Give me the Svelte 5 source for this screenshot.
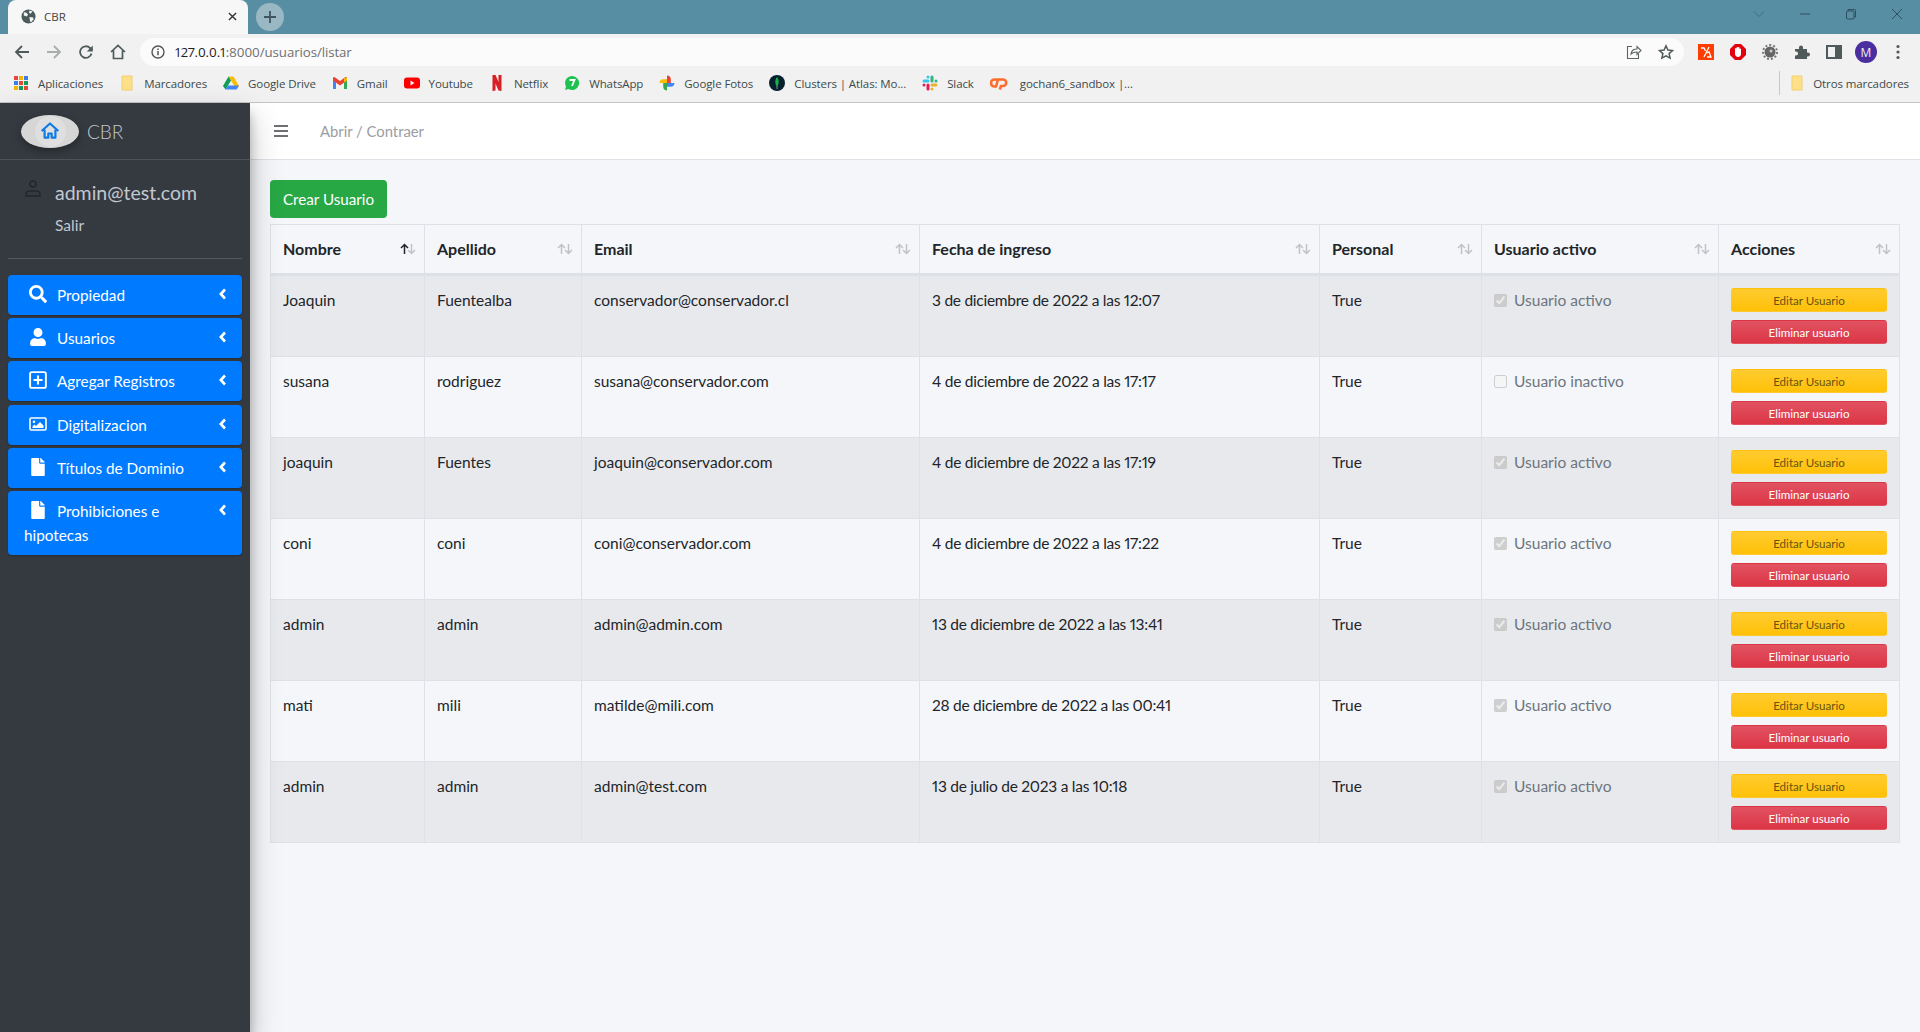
<script>
  const bookmarks = [
    { icon: 'apps', label: 'Aplicaciones' },
    { icon: 'folder', label: 'Marcadores' },
    { icon: 'drive', label: 'Google Drive' },
    { icon: 'gmail', label: 'Gmail' },
    { icon: 'youtube', label: 'Youtube' },
    { icon: 'netflix', label: 'Netflix' },
    { icon: 'whatsapp', label: 'WhatsApp' },
    { icon: 'photos', label: 'Google Fotos' },
    { icon: 'mongo', label: 'Clusters | Atlas: Mo...' },
    { icon: 'slack', label: 'Slack' },
    { icon: 'cp', label: 'gochan6_sandbox |...' }
  ];
  const appDots = ['#e8453c','#f4b400','#3b7ded','#3b7ded','#e8453c','#0f9d58','#f4b400','#0f9d58','#e8453c'];
  const menu = [
    { icon: 'search', label: 'Propiedad' },
    { icon: 'user', label: 'Usuarios' },
    { icon: 'plus', label: 'Agregar Registros' },
    { icon: 'image', label: 'Digitalizacion' },
    { icon: 'file', label: 'Títulos de Dominio' },
    { icon: 'file', label: 'Prohibiciones e hipotecas' }
  ];
  const columns = ['Nombre', 'Apellido', 'Email', 'Fecha de ingreso', 'Personal', 'Usuario activo', 'Acciones'];
  const users = [
    ['Joaquin', 'Fuentealba', 'conservador@conservador.cl', '3 de diciembre de 2022 a las 12:07', true],
    ['susana', 'rodriguez', 'susana@conservador.com', '4 de diciembre de 2022 a las 17:17', false],
    ['joaquin', 'Fuentes', 'joaquin@conservador.com', '4 de diciembre de 2022 a las 17:19', true],
    ['coni', 'coni', 'coni@conservador.com', '4 de diciembre de 2022 a las 17:22', true],
    ['admin', 'admin', 'admin@admin.com', '13 de diciembre de 2022 a las 13:41', true],
    ['mati', 'mili', 'matilde@mili.com', '28 de diciembre de 2022 a las 00:41', true],
    ['admin', 'admin', 'admin@test.com', '13 de julio de 2023 a las 10:18', true]
  ];
</script>

<div class="window">
  <header class="chrome">
    <div class="tabstrip">
      <div class="tab">
        <svg class="favicon" viewBox="0 0 16 16"><circle cx="8" cy="8" r="7.5" fill="#4a5a5a"/><path d="M3 3.500l3 .5 1.500 2-1.500 2-3-1zM9 1.500l3 1-1.500 2.500-2-1zM9 8.500l4 .5 .5 2-3 3.500-1-2z" fill="#f4f4f4"/></svg>
        <span class="tabtitle">CBR</span>
        <svg class="tabclose" viewBox="0 0 10 10"><path d="M1 1l8 8M9 1l-8 8" stroke="#333" stroke-width="1.500"/></svg>
      </div>
      <div class="newtab"><svg viewBox="0 0 14 14"><path d="M7 1v12M1 7h12" stroke="#3f5660" stroke-width="1.800"/></svg></div>
      <div class="wincontrols">
        <svg viewBox="0 0 12 12"><path d="M1 3.500l5 5 5-5" fill="none" stroke="#3f6b7d" stroke-width="1"/></svg>
        <svg viewBox="0 0 12 12"><path d="M1 6h10" stroke="#2f4f5c" stroke-width="1"/></svg>
        <svg viewBox="0 0 12 12"><path d="M3 3V1.500h6.500a1 1 0 0 1 1 1V9H9" fill="none" stroke="#2f4f5c"/><rect x="1.500" y="3" width="7.500" height="8" rx="1" fill="none" stroke="#2f4f5c"/></svg>
        <svg viewBox="0 0 12 12"><path d="M1 1l10 10M11 1L1 11" stroke="#2f4f5c" stroke-width="1"/></svg>
      </div>
    </div>
    <div class="toolbar">
      <div class="navbtns">
        <svg viewBox="0 0 16 16"><path d="M15 8H2M8 2L2 8l6 6" fill="none" stroke="#4f5b5b" stroke-width="1.800"/></svg>
        <svg viewBox="0 0 16 16"><path d="M1 8h13M8 2l6 6-6 6" fill="none" stroke="#a9adad" stroke-width="1.800"/></svg>
        <svg viewBox="0 0 16 16"><path d="M13.500 9.500A5.800 5.800 0 1 1 12 4L14 6" fill="none" stroke="#4f5b5b" stroke-width="1.800"/><path d="M14.800 1.500v6h-6z" fill="#4f5b5b"/></svg>
        <svg viewBox="0 0 16 16"><path d="M1 8l7-6.500L15 8M3.500 6.500V14.500h9V6.500" fill="none" stroke="#4f5b5b" stroke-width="1.700"/></svg>
      </div>
      <div class="omnibox">
        <svg class="info" viewBox="0 0 14 14"><circle cx="7" cy="7" r="6" fill="none" stroke="#555" stroke-width="1.400"/><path d="M7 6v4.200M7 3.400v1.500" stroke="#555" stroke-width="1.500"/></svg>
        <span class="url"><b>127.0.0.1</b>:8000/usuarios/listar</span>
        <svg class="share" viewBox="0 0 16 16"><path d="M6 2.500H1.500v12h11V10" fill="none" stroke="#5b6464" stroke-width="1.100"/><path d="M5 10c.5-3.500 3-5 6-5V2.500l4 4-4 4V8c-2.500 0-4.500 .5-6 2z" fill="none" stroke="#5b6464" stroke-width="1.100"/></svg>
        <svg class="star" viewBox="0 0 16 16"><path d="M8 1.800l1.900 4.200 4.600.5-3.400 3.100 1 4.500L8 11.800l-4.100 2.300 1-4.500L1.500 6.500l4.600-.5z" fill="none" stroke="#4f5b5b" stroke-width="1.500"/></svg>
      </div>
      <div class="extensions">
        <svg viewBox="0 0 16 16"><rect width="16" height="16" fill="#ff3d00"/><path d="M3 4h3l1.500 3M11 3L6 13M9 9l2-1 2 5H9" fill="none" stroke="#fff" stroke-width="1.300"/></svg>
        <svg viewBox="0 0 16 16"><path d="M5 0h6l5 5v6l-5 5H5l-5-5V5z" fill="#e3000f"/><path d="M5 7V4.500a.8 .8 0 0 1 1.500 0V3.500a.8 .8 0 0 1 1.500 0 .8 .8 0 0 1 1.500 0V5a.8 .8 0 0 1 1.500 0v5c0 2-1.500 3-3 3S5.500 12 5 10.500z" fill="#fff"/></svg>
        <svg viewBox="0 0 16 16"><circle cx="8" cy="8" r="5.500" fill="#666"/><circle cx="8" cy="8" r="7" fill="none" stroke="#777" stroke-width="2" stroke-dasharray="2 2"/><circle cx="9" cy="7" r="1.500" fill="#ccc"/></svg>
        <svg viewBox="0 0 16 16"><path d="M1 5h4V3.500a2 2 0 0 1 4 0V5h4v3.500h1a2 2 0 0 1 0 4h-1V15H1v-3.500h1a2 2 0 0 0 0-4H1z" fill="#4f5b5b"/></svg>
        <svg viewBox="0 0 16 16"><rect x="1" y="2" width="14" height="12" fill="none" stroke="#4f5b5b" stroke-width="2"/><rect x="9" y="2" width="6" height="12" fill="#4f5b5b"/></svg>
        <div class="avatar">M</div>
        <svg viewBox="0 0 16 16"><circle cx="8" cy="2.500" r="1.600" fill="#4f5b5b"/><circle cx="8" cy="8" r="1.600" fill="#4f5b5b"/><circle cx="8" cy="13.500" r="1.600" fill="#4f5b5b"/></svg>
      </div>
    </div>
    <div class="bookmarks">
      {#each bookmarks as b}
        <div class="bookmark">
          {#if b.icon === 'apps'}
            <div class="appgrid">{#each appDots as c}<i style:background={c}></i>{/each}</div>
          {:else if b.icon === 'folder'}
            <svg viewBox="0 0 16 16"><path d="M3 1h10v14H3z" fill="#ffe08a" stroke="#f2cf6a"/></svg>
          {:else if b.icon === 'drive'}
            <svg viewBox="0 0 16 16"><path d="M5.500 1.500h5L16 11l-2.500 3.500z" fill="#fbbc04"/><path d="M5.500 1.500L0 11l2.500 3.500L8 5.500z" fill="#0f9d58"/><path d="M5 10.500h11l-2.500 4h-11z" fill="#4285f4"/></svg>
          {:else if b.icon === 'gmail'}
            <svg viewBox="0 0 16 16"><path d="M1 4v10h3V7z" fill="#4285f4"/><path d="M15 4v10h-3V7z" fill="#34a853"/><path d="M1 2.500v3l7 5 7-5v-3l-1.500-.5L8 6 2.500 2z" fill="#ea4335"/><path d="M12 3.500l3-1v3l-3 2z" fill="#fbbc04"/></svg>
          {:else if b.icon === 'youtube'}
            <svg viewBox="0 0 16 16"><rect y="2.500" width="16" height="11" rx="3" fill="#f00"/><path d="M6.500 5.500v5l4-2.500z" fill="#fff"/></svg>
          {:else if b.icon === 'netflix'}
            <svg viewBox="0 0 16 16"><path d="M3.500 0h3l3 7V0h3v16l-3-.5-3-7v7l-3 .5z" fill="#d81f26"/></svg>
          {:else if b.icon === 'whatsapp'}
            <svg viewBox="0 0 16 16"><path d="M8 1a7 7 0 1 1-3.500 13L1 15l1-3.500A7 7 0 0 1 8 1z" fill="#1fc14f"/><path d="M5.500 5h5L8 11" fill="none" stroke="#fff" stroke-width="1.800"/></svg>
          {:else if b.icon === 'photos'}
            <svg viewBox="0 0 16 16"><path d="M8 8V0.500a4 4 0 0 1 3.800 3.800V8z" fill="#ea4335"/><path d="M8 8h7.500a4 4 0 0 1-3.800 3.800H8z" fill="#4285f4"/><path d="M8 8v7.500a4 4 0 0 1-3.800-3.800V8z" fill="#34a853"/><path d="M8 8H.5a4 4 0 0 1 3.800-3.800H8z" fill="#fbbc04"/></svg>
          {:else if b.icon === 'mongo'}
            <svg viewBox="0 0 16 16"><circle cx="8" cy="8" r="8" fill="#06202e"/><path d="M8 2c2 2.500 2.500 6 0 10-2.500-4-2-7.500 0-10z" fill="#18b04c"/><path d="M8 11v3" stroke="#9aa" stroke-width=".8"/></svg>
          {:else if b.icon === 'slack'}
            <svg viewBox="0 0 16 16"><g stroke-width="3" stroke-linecap="round"><path d="M6 2v0M2 6h4" stroke="#36c5f0"/><path d="M10 2v4M14 6h0" stroke="#2eb67d"/><path d="M14 10h-4M10 14h0" stroke="#ecb22e"/><path d="M6 14v-4M2 10h0" stroke="#e01e5a"/></g></svg>
          {:else if b.icon === 'cp'}
            <svg class="cpicon" viewBox="0 0 18 14"><path d="M7 3.500H4.500a3.500 3.500 0 0 0 0 7H6L8 3.500h5a3 3 0 0 1 0 6.500h-2L9.800 13.500" fill="none" stroke="#ff6c2c" stroke-width="2.600"/></svg>
          {/if}
          <span>{b.label}</span>
        </div>
      {/each}
      <div class="other">
        <svg viewBox="0 0 16 16"><path d="M3 1h10v14H3z" fill="#ffe08a" stroke="#f2cf6a"/></svg>
        <span>Otros marcadores</span>
      </div>
    </div>
  </header>

  <div class="page">
    <aside class="sidebar">
      <div class="brand">
        <div class="logo">
          <div class="logocircle">
            <svg viewBox="0 0 24 24"><path d="M2 12L12 3l10 9M5.500 10.500V20H10v-5h4v5h4.500v-9.500" fill="none" stroke="#0d7be6" stroke-width="2.600" stroke-linejoin="round"/></svg>
          </div>
        </div>
        <span class="brandtext">CBR</span>
      </div>
      <div class="sidebody">
        <div class="userpanel">
          <svg class="usericon" viewBox="0 0 16 17"><circle cx="8" cy="4" r="3" fill="none" stroke="#23272b" stroke-width="1.500"/><path d="M1 16v-2c0-2 2-3 4-3h6c2 0 4 1 4 3v2z" fill="none" stroke="#23272b" stroke-width="1.500"/></svg>
          <div class="userinfo">
            <div class="email">admin@test.com</div>
            <div class="salir">Salir</div>
          </div>
        </div>
        <nav class="menu">
          {#each menu as m}
            <div class="item">
              <svg class="chev" viewBox="0 0 8 12"><path d="M6 1.500L1.800 6 6 10.500" fill="none" stroke="#fff" stroke-width="2.600"/></svg>
              <span class="micon">
                {#if m.icon === 'search'}
                  <svg class="sz18" viewBox="0 0 512 512"><path fill="#fff" d="M505 442.700L405.300 343c-4.500-4.500-10.600-7-17-7H372c27.600-35.300 44-79.700 44-128C416 93.100 322.900 0 208 0S0 93.100 0 208s93.100 208 208 208c48.300 0 92.700-16.400 128-44v16.300c0 6.400 2.500 12.500 7 17l99.700 99.700c9.400 9.400 24.600 9.400 33.900 0l28.300-28.300c9.400-9.400 9.400-24.600.1-34zM208 336c-70.700 0-128-57.200-128-128 0-70.700 57.200-128 128-128 70.700 0 128 57.200 128 128 0 70.700-57.200 128-128 128z"/></svg>
                {:else if m.icon === 'user'}
                  <svg class="sz18" viewBox="0 0 448 512"><path fill="#fff" d="M224 256c70.700 0 128-57.300 128-128S294.700 0 224 0 96 57.300 96 128s57.300 128 128 128zm89.600 32h-16.700c-22.200 10.200-46.900 16-72.900 16s-50.600-5.800-72.900-16h-16.700C60.200 288 0 348.200 0 422.400V464c0 26.500 21.500 48 48 48h352c26.500 0 48-21.500 48-48v-41.600c0-74.200-60.200-134.400-134.400-134.400z"/></svg>
                {:else if m.icon === 'plus'}
                  <svg class="sz18" viewBox="0 0 16 16"><rect x="1" y="1" width="14" height="14" rx="1.500" fill="none" stroke="#fff" stroke-width="1.700"/><path d="M8 4v8M4 8h8" stroke="#fff" stroke-width="1.900"/></svg>
                {:else if m.icon === 'image'}
                  <svg class="sz18" viewBox="0 0 18 14"><rect x="1" y="1" width="16" height="12" rx="1.200" fill="none" stroke="#fff" stroke-width="1.600"/><circle cx="5" cy="4.800" r="1.300" fill="#fff"/><path d="M3.500 11V9.500l2-2 1.500 1.500 4-4 3.500 3.500V11z" fill="#fff"/></svg>
                {:else}
                  <svg class="sz18" viewBox="0 0 384 512"><path fill="#fff" d="M224 136V0H24C10.700 0 0 10.700 0 24v464c0 13.300 10.700 24 24 24h336c13.300 0 24-10.700 24-24V160H248c-13.200 0-24-10.800-24-24zm160-14.100v6.100H256V0h6.100c6.400 0 12.500 2.500 17 7l97.900 98c4.500 4.500 7 10.600 7 16.900z"/></svg>
                {/if}
              </span>{m.label}
            </div>
          {/each}
        </nav>
      </div>
    </aside>

    <main class="main">
      <div class="topnav">
        <svg class="burger" viewBox="0 0 14 12"><path d="M0 1h14M0 6h14M0 11h14" stroke="#6f6f74" stroke-width="2"/></svg>
        <span class="toggle">Abrir / Contraer</span>
      </div>
      <div class="content">
        <button class="create">Crear Usuario</button>
        <table>
          <thead>
            <tr>
              {#each columns as c, i}
                <th>
                  <div class="thin">
                    <span>{c}</span>
                    <svg class="sort" viewBox="0 0 16 12"><path d="M4.500 11V1.500M1 5l3.500-3.500L8 5" fill="none" stroke={i === 0 ? '#212529' : '#bfc2c6'} stroke-width="1.500"/><path d="M11.500 1v9.500M8 7l3.500 3.500L15 7" fill="none" stroke="#bfc2c6" stroke-width="1.500"/></svg>
                  </div>
                </th>
              {/each}
            </tr>
          </thead>
          <tbody>
            {#each users as u}
              <tr>
                <td>{u[0]}</td>
                <td>{u[1]}</td>
                <td>{u[2]}</td>
                <td class="date">{u[3]}</td>
                <td>True</td>
                <td>
                  <label class="status">
                    <input type="checkbox" checked={u[4]} disabled />
                    <span>{u[4] ? 'Usuario activo' : 'Usuario inactivo'}</span>
                  </label>
                </td>
                <td>
                  <div class="actions">
                    <button class="edit">Editar Usuario</button>
                    <button class="del">Eliminar usuario</button>
                  </div>
                </td>
              </tr>
            {/each}
          </tbody>
        </table>
      </div>
    </main>
  </div>
</div>

<style>
  :global(body) { margin: 0; background: #f4f6f9; }
  .window { height: 1032px; display: flex; flex-direction: column; overflow: hidden; font-family: "Lato", "Noto Sans", sans-serif; font-variant-numeric: proportional-nums; color: #212529; }
  svg { display: block; flex: none; }

  .chrome { font-family: "Open Sans", "Noto Sans", sans-serif; flex: none; border-bottom: 1px solid #c4c4c4; }
  .tabstrip { height: 34px; background: #578ea3; display: flex; align-items: flex-start; }
  .tab { width: 240px; height: 34px; margin-left: 8px; background: #f7f7f7; border-radius: 8px 8px 0 0; display: flex; align-items: center; padding: 0 11px 1px 13px; box-sizing: border-box; font-size: 11.500px; color: #444; }
  .favicon { width: 15px; height: 15px; margin-right: 8px; }
  .tabtitle { flex: 1; }
  .tabclose { width: 9px; height: 9px; }
  .newtab { width: 28px; height: 28px; border-radius: 50%; background: #9ab8c4; margin: 3px 0 0 8px; display: flex; align-items: center; justify-content: center; }
  .newtab svg { width: 14px; height: 14px; }
  .wincontrols { margin-left: auto; display: flex; align-items: center; height: 28px; gap: 34px; padding-right: 17px; }
  .wincontrols svg { width: 12px; height: 12px; }

  .toolbar { height: 32px; background: #f1f1f1; display: flex; align-items: center; padding-top: 4px; box-sizing: border-box; }
  .navbtns { display: flex; gap: 16px; padding: 0 14px; box-sizing: border-box; width: 140px; flex: none; }
  .navbtns svg { width: 16px; height: 16px; }
  .omnibox { width: 1544px; height: 28px; background: #fbfbfb; border-radius: 14px; display: flex; align-items: center; padding: 0 10px 0 11px; box-sizing: border-box; flex: none; }
  .info { width: 14px; height: 14px; margin-right: 10px; }
  .url { flex: 1; font-size: 13.300px; color: #707070; letter-spacing: -0.1px; }
  .url b { font-weight: 400; color: #222; }
  .share { width: 16px; height: 16px; margin-right: 16px; }
  .star { width: 16px; height: 16px; }
  .extensions { display: flex; align-items: center; gap: 16px; padding-left: 14px; }
  .extensions svg { width: 16px; height: 16px; }
  .avatar { width: 22px; height: 22px; border-radius: 50%; background: #4a2ea0; color: #eee; font-size: 12px; display: flex; align-items: center; justify-content: center; margin: 0 -3px; }

  .bookmarks { height: 36px; box-sizing: border-box; background: #f1f1f1; display: flex; align-items: center; padding: 0 0 2px 14px; gap: 16px; font-size: 11.500px; color: #3c4a4a; letter-spacing: -0.1px; }
  .bookmark { display: flex; align-items: center; gap: 9px; white-space: nowrap; }
  .bookmark svg { width: 16px; height: 16px; }
  .bookmark .cpicon { width: 18px; height: 14px; margin-right: 3px; }
  .appgrid { width: 14px; height: 14px; margin-right: 1px; display: grid; grid-template-columns: repeat(3, 4px); gap: 1px; }
  .appgrid i { display: block; }
  .other { margin-left: auto; display: flex; align-items: center; gap: 8px; padding: 4px 11px 4px 5px; border-left: 1px solid #c8c8c8; }
  .other svg { width: 16px; height: 16px; margin-left: 4px; }

  .page { flex: 1; display: flex; min-height: 0; }
  .sidebar { width: 250px; flex: none; background: #343a40; box-shadow: 0 14px 28px rgba(0,0,0,.25), 0 10px 10px rgba(0,0,0,.22); position: relative; z-index: 2; }
  .brand { height: 57px; box-sizing: border-box; display: flex; align-items: center; padding-left: 21px; border-bottom: 1px solid #4b545c; gap: 8px; }
  .logo { width: 58px; height: 33px; border-radius: 50%; background: #d6d6d6; display: flex; align-items: center; justify-content: center; box-shadow: 0 3px 8px rgba(0,0,0,.35); }
  .logocircle { width: 31px; height: 31px; border-radius: 50%; background: #dfdfdf; display: flex; align-items: center; justify-content: center; }
  .logocircle svg { width: 20px; height: 20px; }
  .brandtext { font-size: 19px; font-weight: 300; color: #c2c7d0; }
  .sidebody { padding: 0 8px; }
  .userpanel { display: flex; padding: 18px 0 21px 17px; border-bottom: 1px solid #4f5962; }
  .usericon { width: 16px; height: 17px; margin: 2px 14px 0 0; }
  .email { font-size: 19.500px; line-height: 30px; color: #c2c7d0; }
  .salir { font-size: 15.500px; line-height: 24px; margin-top: 5px; color: #c2c7d0; }
  .menu { padding-top: 16px; display: flex; flex-direction: column; gap: 3.200px; }
  .item { background: #007bff; color: #fff; border-radius: 4px; padding: 8px 16px; line-height: 24px; min-height: 24px; font-size: 15.300px; box-shadow: 0 1px 2px rgba(0,0,0,.25); }
  .chev { float: right; width: 8px; height: 12px; margin: 5px -1px 0 22px; }
  .micon { display: inline-flex; width: 33px; height: 24px; align-items: flex-start; vertical-align: top; padding-left: 5px; box-sizing: border-box; }
  .sz18 { height: 18px; width: 18px; margin-top: 2px; }

  .main { flex: 1; min-width: 0; display: flex; flex-direction: column; }
  .topnav { height: 57px; box-sizing: border-box; background: #fff; border-bottom: 1px solid #dee2e6; display: flex; align-items: center; padding-left: 24px; }
  .burger { width: 14px; height: 12px; margin-right: 32px; }
  .toggle { font-size: 14.800px; color: #9a9da1; }
  .content { padding: 20px 20px 0; }
  .create { display: block; height: 38px; width: 117px; padding: 0; border: 0; border-radius: 4px; background: #28a745; color: #fff; font: 15.200px "Lato", sans-serif; }
  table { margin-top: 6px; width: 1630px; table-layout: fixed; border-collapse: collapse; font-size: 15.500px; line-height: 24px; }
  th, td { border: 1px solid #dee2e6; text-align: left; box-sizing: border-box; padding: 12px; vertical-align: top; font-weight: 400; }
  th { height: 50px; padding: 0 8px 0 12px; vertical-align: middle; border-bottom: 3px solid #dee2e6; font-weight: 700; font-size: 16px; }
  td { height: 81px; }
  .date { letter-spacing: -0.26px; }
  th:nth-child(1) { width: 154px; }
  th:nth-child(2) { width: 157px; }
  th:nth-child(3) { width: 338px; }
  th:nth-child(4) { width: 400px; }
  th:nth-child(5) { width: 162px; }
  th:nth-child(6) { width: 237px; }
  tbody tr:nth-child(odd) { background: #e8e9ed; }
  .thin { display: flex; align-items: center; justify-content: space-between; }
  .sort { width: 16px; height: 12px; }
  .status { display: flex; align-items: center; color: #6c757d; line-height: 24px; }
  .status input { margin: 0 7px 0 0; width: 13px; height: 13px; }
  .actions { display: flex; flex-direction: column; gap: 8px; }
  .actions button { height: 24px; border-radius: 3px; padding: 0; font: 11.600px "Lato", sans-serif; border: 1px solid transparent; }
  .edit { background: linear-gradient(180deg, #ffcb30, #ffc107); color: #6b5310; }
  .del { background: linear-gradient(180deg, #e15361, #dc3545); color: #fff; }
</style>
